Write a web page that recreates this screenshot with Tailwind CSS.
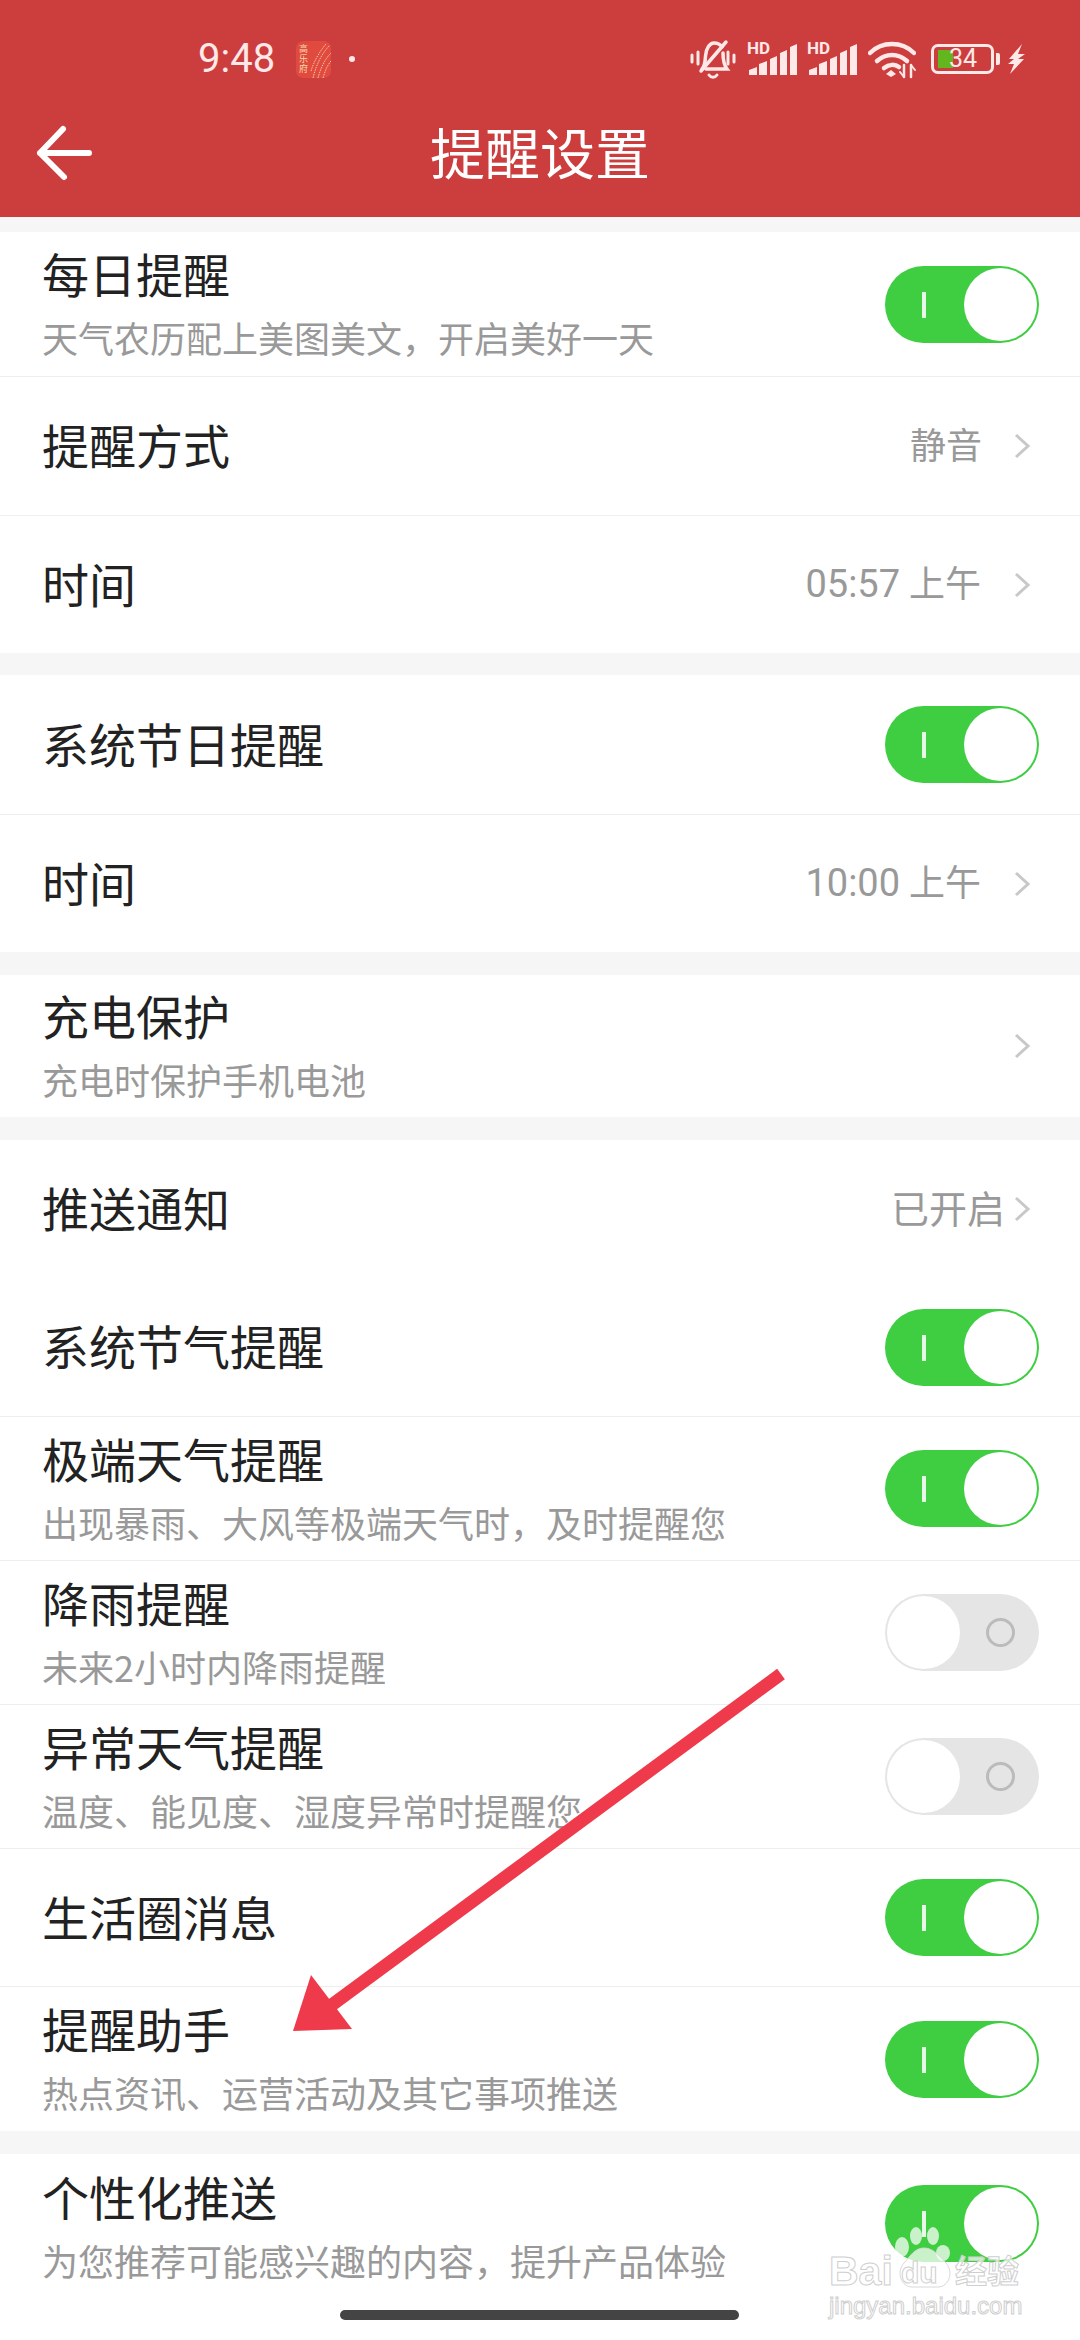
<!DOCTYPE html>
<html>
<head>
  <meta charset="UTF-8">
  <title>提醒设置</title>
  <script src="https://cdn.jsdelivr.net/npm/@tailwindcss/browser@4"></script>
</head>
<body class="bg-[#f6f6f6] font-['Noto_Sans_CJK_SC','Noto_Sans',sans-serif] text-[#222222]">
<div class="relative w-[1080px] h-[2340px] overflow-hidden">

  <!-- header -->
  <header class="h-[217px] bg-[#cc3d3d] flex flex-col">
    <div class="h-[118px] flex items-center pl-[198px] pr-[55px] text-[#ffe8e8]">
      <span class="font-['Roboto'] text-[40px] leading-none w-[78px]">9:48</span>
      <div class="relative ml-[20px] w-[35px] h-[37px] rounded-[7px] bg-[#e04a3f] overflow-hidden">
        <span class="absolute left-[3px] top-[3px] w-[10px] text-[9px] leading-[10px] text-[#f7d9a8]">高乐府</span>
        <svg class="absolute inset-0" width="35" height="37" viewBox="0 0 35 37" fill="none" stroke="#f5c9a8" stroke-width="1" stroke-dasharray="1.5 1">
          <path d="M17 37C20 24 26 12 34 4M22 37C25 26 29 18 35 12M27 37C29 30 31 25 35 20M15 30C18 20 24 10 30 3"/>
        </svg>
      </div>
      <span class="ml-[18px] w-[6px] h-[6px] rounded-full bg-[#ffe8e8]"></span>

      <div class="ml-auto flex items-center h-[40px]">
        <!-- muted bell -->
        <svg width="46" height="40" viewBox="0 0 46 40" fill="none" stroke="#ffe8e8" stroke-width="3.5" stroke-linecap="round">
          <path d="M2 16v7M8 13v12M38 13v12M44 16v7" stroke-width="3"/>
          <path d="M12 30c3-3 3-6 3.500-13C16 9 20 4 24 4c3 0 6 1 8 4M33 14c0 7 1 12 4 16H16"/>
          <path d="M11 32L36 3"/>
          <path d="M19 36c2 3 6 3 8 0" stroke-width="3"/>
        </svg>
        <!-- signal 1 -->
        <div class="relative ml-[11px] w-[50px] h-[40px]">
          <span class="absolute left-0 top-[0px] font-['Roboto'] font-bold text-[17px] leading-[18px]">HD</span>
          <svg class="absolute inset-0" width="50" height="40" viewBox="0 0 50 40" fill="#ffe8e8">
            <path d="M2 36v-5l8-3v8zM12 36V25l8-3v14zM23 36V20l7-3v19zM33 36V14l7-3v25zM43 36V8l7-3v31z"/>
          </svg>
        </div>
        <!-- signal 2 -->
        <div class="relative ml-[10px] w-[50px] h-[40px]">
          <span class="absolute left-0 top-[0px] font-['Roboto'] font-bold text-[17px] leading-[18px]">HD</span>
          <svg class="absolute inset-0" width="50" height="40" viewBox="0 0 50 40" fill="#ffe8e8">
            <path d="M2 36v-5l8-3v8zM12 36V25l8-3v14zM23 36V20l7-3v19zM33 36V14l7-3v25zM43 36V8l7-3v31z"/>
          </svg>
        </div>
        <!-- wifi -->
        <svg class="ml-[11px]" width="48" height="40" viewBox="0 0 48 40" fill="none" stroke="#ffe8e8" stroke-width="4.500" stroke-linecap="round">
          <path d="M2 14C14 2 34 2 46 14"/>
          <path d="M9 22c9-8 21-8 30 0"/>
          <path d="M16 29c5-4 11-4 15-1"/>
          <path d="M18 35l5-4 5 4-5 3z" fill="#ffe8e8" stroke="none"/>
          <path d="M36 26v12M43 26v12" stroke-width="2.500"/>
          <path d="M32 33l4 5M47 31l-4-5" stroke-width="2"/>
        </svg>
        <!-- battery -->
        <div class="relative ml-[15px] w-[63px] h-[30px] rounded-[7px] border-[3px] border-[#ffe8e8]">
          <div class="absolute left-[4px] top-[3px] w-[15px] h-[18px] bg-[#62b71e]"></div>
          <span class="absolute left-[15px] top-[-2px] font-['Roboto'] text-[25px] leading-[28px]">34</span>
        </div>
        <span class="ml-[2px] w-[4px] h-[12px] rounded-r-[2px] bg-[#ffe8e8]"></span>
        <svg class="ml-[7px]" width="18" height="32" viewBox="0 0 18 32" fill="#ffe8e8">
          <path d="M15 1L2 16h5l-6 5h6L3 31l14-15h-6l7-5h-7z"/>
        </svg>
      </div>
    </div>
    <div class="relative h-[68px] flex items-center justify-center">
      <svg class="absolute left-[35px] top-[6px]" width="58" height="58" viewBox="0 0 58 58" fill="none" stroke="#ffffff" stroke-width="6" stroke-linecap="round" stroke-linejoin="round">
        <path d="M54 29H5M28 5L5 29l24 24" />
      </svg>
      <h1 class="text-white text-[55px] leading-none font-normal pb-[3px]">提醒设置</h1>
    </div>
  </header>

  <!-- group 1 -->
  <section class="mt-[15px] bg-white">
    <div class="h-[145px] flex items-center justify-between pl-[42px] pr-[41px] border-b border-[#eeeeee]">
      <div class="pb-[4px]"><div class="text-[47px] leading-[70px]">每日提醒</div><div class="text-[36px] leading-[58px] text-[#999999]">天气农历配上美图美文，开启美好一天</div></div>
      <div class="relative w-[154px] h-[77px] rounded-full bg-[#3fcd41]"><span class="absolute left-[37px] top-[26px] w-[4px] h-[26px] bg-[#e8f8e8]"></span><span class="absolute right-[2px] top-[2px] w-[73px] h-[73px] rounded-full bg-white"></span></div>
    </div>
    <div class="h-[139px] flex items-center justify-between pl-[42px] pr-[49px] border-b border-[#eeeeee]">
      <div class="text-[47px] leading-[70px] pb-[4px]">提醒方式</div>
      <div class="flex items-center text-[36px] text-[#999999]"><span class="pb-[6px]">静音</span><svg class="ml-[32px]" width="17" height="26" viewBox="0 0 17 26" fill="none" stroke="#c8c8c8" stroke-width="3"><path d="M2 2l12 11L2 24"/></svg></div>
    </div>
    <div class="h-[137px] flex items-center justify-between pl-[42px] pr-[49px]">
      <div class="text-[47px] leading-[70px] pb-[4px]">时间</div>
      <div class="flex items-center text-[36px] text-[#999999]"><span class="font-['Roboto','Noto_Sans_CJK_SC']"><span class="text-[38px]">05:57</span> 上午</span><svg class="ml-[33px]" width="17" height="26" viewBox="0 0 17 26" fill="none" stroke="#c8c8c8" stroke-width="3"><path d="M2 2l12 11L2 24"/></svg></div>
    </div>
  </section>

  <!-- group 2 -->
  <section class="mt-[22px] bg-white">
    <div class="h-[140px] flex items-center justify-between pl-[42px] pr-[41px] border-b border-[#eeeeee]">
      <div class="text-[47px] leading-[70px] pb-[4px]">系统节日提醒</div>
      <div class="relative w-[154px] h-[77px] rounded-full bg-[#3fcd41]"><span class="absolute left-[37px] top-[26px] w-[4px] h-[26px] bg-[#e8f8e8]"></span><span class="absolute right-[2px] top-[2px] w-[73px] h-[73px] rounded-full bg-white"></span></div>
    </div>
    <div class="h-[137px] flex items-center justify-between pl-[42px] pr-[49px]">
      <div class="text-[47px] leading-[70px] pb-[4px]">时间</div>
      <div class="flex items-center text-[36px] text-[#999999]"><span class="font-['Roboto','Noto_Sans_CJK_SC']"><span class="text-[38px]">10:00</span> 上午</span><svg class="ml-[33px]" width="17" height="26" viewBox="0 0 17 26" fill="none" stroke="#c8c8c8" stroke-width="3"><path d="M2 2l12 11L2 24"/></svg></div>
    </div>
  </section>

  <!-- group 3 -->
  <section class="mt-[23px] bg-white">
    <div class="h-[142px] flex items-center justify-between pl-[42px] pr-[49px]">
      <div class="pb-[4px]"><div class="text-[47px] leading-[70px]">充电保护</div><div class="text-[36px] leading-[58px] text-[#999999]">充电时保护手机电池</div></div>
      <svg width="17" height="26" viewBox="0 0 17 26" fill="none" stroke="#c8c8c8" stroke-width="3"><path d="M2 2l12 11L2 24"/></svg>
    </div>
  </section>

  <!-- group 4 -->
  <section class="mt-[23px] bg-white">
    <div class="h-[138px] flex items-center justify-between pl-[42px] pr-[49px]">
      <div class="text-[47px] leading-[70px] pb-[4px]">推送通知</div>
      <div class="flex items-center text-[38px] text-[#999999]"><span class="pb-[5px]">已开启</span><svg class="ml-[9px]" width="17" height="26" viewBox="0 0 17 26" fill="none" stroke="#c8c8c8" stroke-width="3"><path d="M2 2l12 11L2 24"/></svg></div>
    </div>
    <div class="h-[139px] flex items-center justify-between pl-[42px] pr-[41px] border-b border-[#eeeeee]">
      <div class="text-[47px] leading-[70px] pb-[4px]">系统节气提醒</div>
      <div class="relative w-[154px] h-[77px] rounded-full bg-[#3fcd41]"><span class="absolute left-[37px] top-[26px] w-[4px] h-[26px] bg-[#e8f8e8]"></span><span class="absolute right-[2px] top-[2px] w-[73px] h-[73px] rounded-full bg-white"></span></div>
    </div>
    <div class="h-[144px] flex items-center justify-between pl-[42px] pr-[41px] border-b border-[#eeeeee]">
      <div class="pb-[4px]"><div class="text-[47px] leading-[70px]">极端天气提醒</div><div class="text-[36px] leading-[58px] text-[#999999]">出现暴雨、大风等极端天气时，及时提醒您</div></div>
      <div class="relative w-[154px] h-[77px] rounded-full bg-[#3fcd41]"><span class="absolute left-[37px] top-[26px] w-[4px] h-[26px] bg-[#e8f8e8]"></span><span class="absolute right-[2px] top-[2px] w-[73px] h-[73px] rounded-full bg-white"></span></div>
    </div>
    <div class="h-[144px] flex items-center justify-between pl-[42px] pr-[41px] border-b border-[#eeeeee]">
      <div class="pb-[4px]"><div class="text-[47px] leading-[70px]">降雨提醒</div><div class="text-[36px] leading-[58px] text-[#999999]">未来2小时内降雨提醒</div></div>
      <div class="relative w-[154px] h-[77px] rounded-full bg-[#e5e5e5]"><span class="absolute left-[2px] top-[2px] w-[73px] h-[73px] rounded-full bg-white"></span><span class="absolute right-[24px] top-[24px] w-[29px] h-[29px] rounded-full border-[3px] border-[#bbbbbb]"></span></div>
    </div>
    <div class="h-[144px] flex items-center justify-between pl-[42px] pr-[41px] border-b border-[#eeeeee]">
      <div class="pb-[4px]"><div class="text-[47px] leading-[70px]">异常天气提醒</div><div class="text-[36px] leading-[58px] text-[#999999]">温度、能见度、湿度异常时提醒您</div></div>
      <div class="relative w-[154px] h-[77px] rounded-full bg-[#e5e5e5]"><span class="absolute left-[2px] top-[2px] w-[73px] h-[73px] rounded-full bg-white"></span><span class="absolute right-[24px] top-[24px] w-[29px] h-[29px] rounded-full border-[3px] border-[#bbbbbb]"></span></div>
    </div>
    <div class="h-[138px] flex items-center justify-between pl-[42px] pr-[41px] border-b border-[#eeeeee]">
      <div class="text-[47px] leading-[70px] pb-[4px]">生活圈消息</div>
      <div class="relative w-[154px] h-[77px] rounded-full bg-[#3fcd41]"><span class="absolute left-[37px] top-[26px] w-[4px] h-[26px] bg-[#e8f8e8]"></span><span class="absolute right-[2px] top-[2px] w-[73px] h-[73px] rounded-full bg-white"></span></div>
    </div>
    <div class="h-[144px] flex items-center justify-between pl-[42px] pr-[41px]">
      <div class="pb-[4px]"><div class="text-[47px] leading-[70px]">提醒助手</div><div class="text-[36px] leading-[58px] text-[#999999]">热点资讯、运营活动及其它事项推送</div></div>
      <div class="relative w-[154px] h-[77px] rounded-full bg-[#3fcd41]"><span class="absolute left-[37px] top-[26px] w-[4px] h-[26px] bg-[#e8f8e8]"></span><span class="absolute right-[2px] top-[2px] w-[73px] h-[73px] rounded-full bg-white"></span></div>
    </div>
  </section>

  <!-- group 5 -->
  <section class="mt-[23px] bg-white h-[190px]">
    <div class="h-[139px] flex items-center justify-between pl-[42px] pr-[41px]">
      <div class="pb-[0px] mt-[2px]"><div class="text-[47px] leading-[70px]">个性化推送</div><div class="text-[36px] leading-[58px] text-[#999999]">为您推荐可能感兴趣的内容，提升产品体验</div></div>
      <div class="relative w-[154px] h-[77px] rounded-full bg-[#3fcd41]"><span class="absolute left-[37px] top-[26px] w-[4px] h-[26px] bg-[#e8f8e8]"></span><span class="absolute right-[2px] top-[2px] w-[73px] h-[73px] rounded-full bg-white"></span></div>
    </div>
  </section>

  <!-- home indicator -->
  <div class="absolute left-[340px] bottom-[20px] w-[399px] h-[10px] rounded-full bg-[#444444]"></div>

  <!-- red annotation arrow -->
  <svg class="absolute left-0 top-0 pointer-events-none" width="1080" height="2340" viewBox="0 0 1080 2340">
    <path d="M781 1674L329 2007" stroke="#ee3a4b" stroke-width="13" fill="none"/>
    <path d="M311 1975L352 2029L293 2031z" fill="#ee3a4b"/>
  </svg>

  <!-- baidu watermark -->
  <div class="absolute left-[829px] top-[2220px] w-[250px] h-[110px]">
    <svg class="absolute left-0 top-0" width="130" height="72" viewBox="0 0 130 72" fill="#ffffff" fill-opacity="0.72">
      <ellipse cx="73" cy="27" rx="7" ry="10"/><ellipse cx="87" cy="16" rx="6" ry="9"/>
      <ellipse cx="104" cy="16" rx="6" ry="9"/><ellipse cx="114" cy="33" rx="7" ry="8"/>
      <path d="M95 28c-9 0-14 8-20 15-8 9-3 24 8 24h26c11 0 16-15 8-24-6-7-13-15-22-15z" stroke="#d8d8d8" stroke-width="1"/>
    </svg>
    <span class="absolute left-0 top-[31px] font-['Liberation_Sans'] font-bold text-[41px] leading-none text-white/70 [-webkit-text-stroke:1px_#cfcfcf]">Bai</span>
    <span class="absolute left-[72px] top-[38px] font-['Liberation_Sans'] font-bold text-[30px] leading-none text-white/70 [-webkit-text-stroke:1px_#cfcfcf]">du</span>
    <span class="absolute left-[126px] top-[33px] text-[32px] leading-none font-bold text-white/70 [-webkit-text-stroke:1px_#cfcfcf]">经验</span>
    <span class="absolute left-0 top-[74px] font-['Liberation_Sans'] text-[24px] leading-none text-white/70 [-webkit-text-stroke:1px_#cfcfcf]">jingyan.baidu.com</span>
  </div>
</div>
</body>
</html>
